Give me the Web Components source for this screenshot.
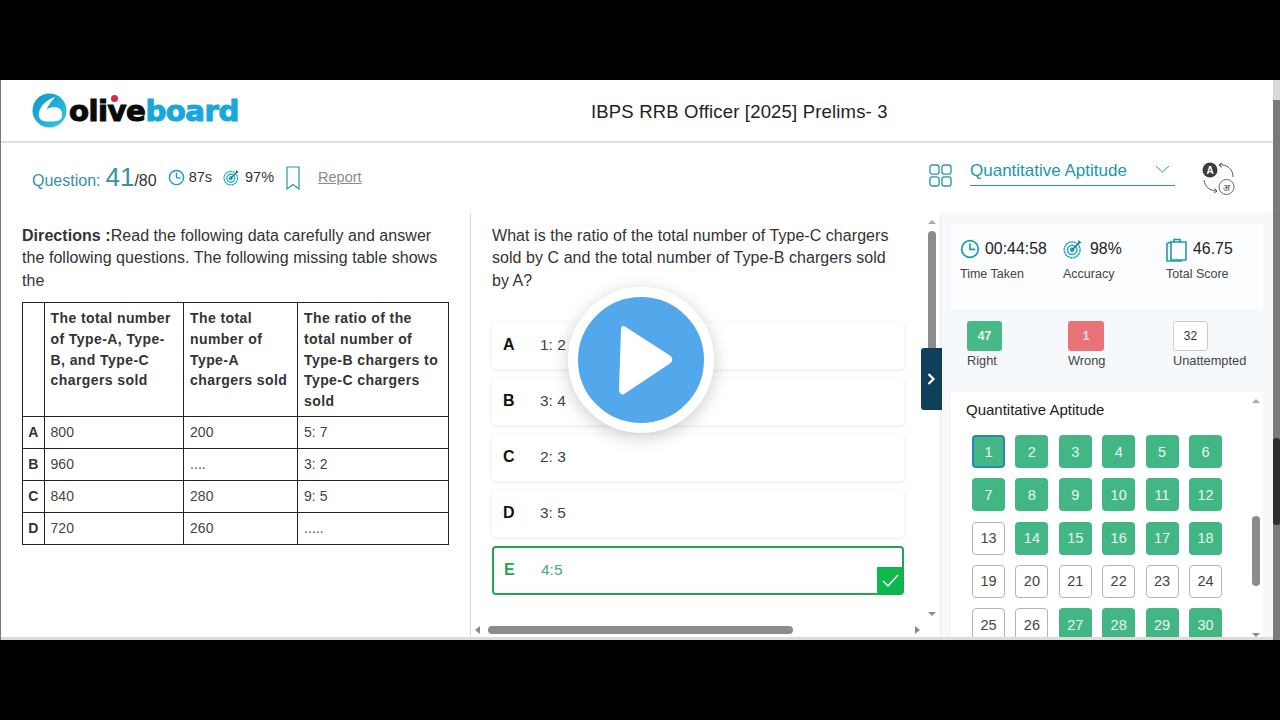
<!DOCTYPE html>
<html><head><meta charset="utf-8"><style>
html,body{margin:0;padding:0;background:#000;height:720px;overflow:hidden;font-family:"Liberation Sans",Arial,sans-serif}
</style></head><body>
<exam-app></exam-app>
<script>
function def(name, html, init){
  customElements.define(name, class extends HTMLElement{
    constructor(){super();this.attachShadow({mode:'open'}).innerHTML=typeof html==='function'?html(this):html;}
    connectedCallback(){ if(init) init(this); }
  });
}
const clock=(s)=>`<svg width="${s}" height="${s}" viewBox="0 0 24 24" fill="none" stroke="#1b9cb0" stroke-width="2"><circle cx="12" cy="12" r="10"/><path d="M12 6v6.500h5.500" stroke-linecap="round"/></svg>`;
const target=(s)=>`<svg width="${s}" height="${s}" viewBox="0 0 24 24" fill="none" stroke="#26a6bd" stroke-width="1.800"><circle cx="11" cy="13" r="9.500" stroke-dasharray="3 .6"/><circle cx="11" cy="13" r="5.600"/><circle cx="11" cy="13" r="2" fill="#26a6bd"/><path d="M11 13 20 4" stroke="#14708a" stroke-width="1.600"/><path d="M18 3.500l1-2.500 1 2 2.500 1-2.500 1.500z" fill="#14708a" stroke="none"/></svg>`;

def('ob-logo',`<style>
:host{display:flex;align-items:center;height:40px;width:210px;flex:none}
.t{font:700 29.200px/40px "DejaVu Sans",sans-serif;letter-spacing:-.5px;margin-left:2px;-webkit-text-stroke:1.100px currentColor;display:flex}
.a{color:#0a0a0a;position:relative}.b{color:#18a7dc}
.dot{position:absolute;left:42px;top:4px;width:7px;height:7px;border-radius:50%;background:#e3223f}
</style>
<svg width="35" height="35" viewBox="0 0 36 36"><defs><linearGradient id="g" x1="0" y1="0" x2="1" y2="1"><stop offset="0" stop-color="#0f93c6"/><stop offset="1" stop-color="#35c8e6"/></linearGradient></defs>
<circle cx="18" cy="18" r="17.500" fill="url(#g)"/><path d="M24 4C14 7 7 15 7 22c0 5 3.500 7 8 7.200 4.500 .3 9 .3 12.500-.8 3-1 4-4.400 3.300-8-.7-3.800-4.300-6-8-6-3 0-5.800 1-7.800 2.600C17 12 20 8 24 4z" fill="#fff"/></svg>
<div class="t"><span class="a">olive<i class="dot"></i></span><span class="b">board</span></div>`);

def('app-header',`<style>
:host{display:flex;align-items:center;height:61px;border-bottom:2px solid #dedede;padding-left:31px;background:#fff;flex:none}
.title{margin:3px 0 0 349px;font-size:18.500px;letter-spacing:.18px;line-height:22px;color:#222}
</style><ob-logo></ob-logo><div class="title">IBPS RRB Officer [2025] Prelims- 3</div>`);

def('q-toolbar',`<style>
:host{display:flex;align-items:center;height:70px;padding:0 38px 0 31px;flex:none;background:#fff;color:#333}
.q{color:#35939f;font-size:16px;display:flex;align-items:baseline;margin-top:-2px}
.n{font-size:26px;margin-left:5px}.d{font-size:16px;color:#333}
.s{display:flex;align-items:center;font-size:14.500px;gap:4px;margin-bottom:2px}
.r{font-size:14.500px;color:#8a8a8a;text-decoration:underline;margin:0 0 2px 18px}
.sp{flex:1}
.sel{width:205px;height:27px;border-bottom:1.500px solid #2a98a8;color:#2296a8;font-size:17px;line-height:24px;margin:-12px 0 0 18px;display:flex;justify-content:space-between;align-items:flex-start;box-sizing:border-box;padding-right:5px}
.sel svg{margin-top:6px}
.lang{margin-left:27px}
</style>
<div class="q">Question: <span class="n">41</span><span class="d">/80</span></div>
<div class="s" style="margin-left:11px">${clock(17)}<span>87s</span></div>
<div class="s" style="margin-left:11px">${target(17)}<span style="margin-left:1px">97%</span></div>
<svg style="margin-left:12px" width="14" height="24" viewBox="0 0 14 24" fill="none" stroke="#2a98a8" stroke-width="1.200"><path d="M1 1h12v22l-6-4.500-6 4.500z"/></svg>
<span class="r">Report</span><span class="sp"></span>
<svg width="23" height="23" viewBox="0 0 24 24" fill="none" stroke="#2a98a8" stroke-width="1.400" style="margin-top:-6px"><rect x="1" y="1" width="9.500" height="9.500" rx="2.500"/><rect x="13.500" y="1" width="9.500" height="9.500" rx="2.500"/><rect x="1" y="13.500" width="9.500" height="9.500" rx="2.500"/><rect x="13.500" y="13.500" width="9.500" height="9.500" rx="2.500"/></svg>
<div class="sel"><span>Quantitative Aptitude</span><svg width="15" height="8" viewBox="0 0 15 8" fill="none" stroke="#2a98a8" stroke-width="1"><path d="M1 1l6.500 6L14 1"/></svg></div>
<svg class="lang" width="33" height="33" viewBox="0 0 33 33" fill="none"><circle cx="8" cy="8" r="7.500" fill="#3c3c3c"/><text x="8" y="11.500" text-anchor="middle" font-family="Liberation Sans" font-weight="700" font-size="10" fill="#fff">A</text><circle cx="24.500" cy="25" r="7.500" stroke="#444" stroke-width=".8"/><text x="24.500" y="28.500" text-anchor="middle" font-family="Noto Sans,DejaVu Sans" font-size="9" fill="#444">अ</text><path d="M17 3c8-1 14 4 14 12M17 3l3.500-2M17 3l3 2.500M2 18c1 7 6 11 13 11M15 29l-3-2.500M15 29l-3 2" stroke="#444" stroke-width=".9"/></svg>`);

def('bar-v',`<style>
:host{display:flex;flex-direction:column;align-items:center;width:14px;position:relative;flex:none}
.u,.d{width:0;height:0;border-left:4px solid transparent;border-right:4px solid transparent}
.u{border-bottom:4px solid #a8a8a8;margin-top:7px}.d{border-top:4px solid #8c8c8c;margin-bottom:3px}
.t{flex:1;width:100%;position:relative}
.th{position:absolute;left:3px;width:8px;background:#8c8c8c;border-radius:4px;top:var(--top);height:var(--h)}
</style><div class="u"></div><div class="t"><div class="th"></div></div><div class="d"></div>`);

def('data-table',`<style>
:host{display:block;margin-top:10px;color:#333}
table{border-collapse:collapse;width:426px;table-layout:fixed;font-size:14px;line-height:20.700px}
td{border:1px solid #222;padding:5px 6px;line-height:21px;vertical-align:top;color:#444}
th{font-weight:700;text-align:left;border:1px solid #222;padding:4.800px 6px 4.700px;vertical-align:top;letter-spacing:.42px;color:#333}
td:first-child{font-weight:700;padding:5px 0;text-align:center;color:#333}
</style><table><colgroup><col style="width:21.500px"><col style="width:139.500px"><col style="width:114px"><col style="width:151px"></colgroup>
<tr><th></th><th>The total number of Type-A, Type-B, and Type-C chargers sold</th><th>The total number of Type-A chargers sold</th><th>The ratio of the total number of Type-B chargers to Type-C chargers sold</th></tr>
<tr><td>A</td><td>800</td><td>200</td><td>5: 7</td></tr>
<tr><td>B</td><td>960</td><td>....</td><td>3: 2</td></tr>
<tr><td>C</td><td>840</td><td>280</td><td>9: 5</td></tr>
<tr><td>D</td><td>720</td><td>260</td><td>.....</td></tr></table>`);

def('direction-pane',`<style>
:host{display:block;width:471px;box-sizing:border-box;padding:11.800px 21px 0 22px;border-right:1px solid #d8d8d8;flex:none;color:#333;font-size:16px;line-height:22.500px;letter-spacing:.05px}
b{font-weight:700}
</style><div><b>Directions :</b>Read the following data carefully and answer the following questions. The following missing table shows the</div><data-table></data-table>`);

def('opt-row',(el)=>{const sel=el.hasAttribute('correct');return `<style>
:host{display:flex;align-items:center;height:46px;margin-bottom:10px;box-sizing:border-box;border-radius:4px;position:relative;background:#fff;padding:0 0 1px 11px;font-size:15.500px;color:#444;box-shadow:0 1px 5px rgba(0,0,0,.09)}
:host([correct]){border:2px solid #22a455;height:49px;box-shadow:none;padding:0 0 0 10px;margin-top:-1px;color:#45a88a}
b{width:37px;font-size:16px;color:#111;flex:none}
:host([correct]) b{color:#22a455}
.c{position:absolute;right:-1px;bottom:-1px;width:26px;height:27px;background:#0fb84c;display:flex;align-items:center;justify-content:center}
</style><b>${el.getAttribute('k')}</b><span><slot></slot></span>${sel?'<div class="c"><svg width="17" height="13" viewBox="0 0 17 13" fill="none" stroke="#fff" stroke-width="1.400"><path d="M1 7l5 5L16 1"/></svg></div>':''}`});

def('question-pane',`<style>
:host{display:flex;width:469px;box-sizing:border-box;flex:none;position:relative;flex-direction:column;height:427px;background:#fff}
.r{display:flex;flex:1;min-height:0}
.c{width:412px;margin-left:21px;padding-top:11.800px;color:#333;font-size:16px;line-height:22.500px;letter-spacing:.05px}
.o{margin-top:30.700px;letter-spacing:0}
bar-v{margin-left:21px;--top:7px;--h:130px}
.h{height:21px;display:flex;align-items:center;position:relative;margin-left:2px;width:447px;flex:none;background:#fff}
.la,.ra{width:0;height:0;border-top:4px solid transparent;border-bottom:4px solid transparent}
.la{border-right:5px solid #8c8c8c;margin-left:2px}.ra{border-left:5px solid #8c8c8c;position:absolute;right:0}
.th{position:absolute;left:15px;width:305px;height:8px;background:#8c8c8c;border-radius:4px}
</style><div class="r"><div class="c"><div>What is the ratio of the total number of Type-C chargers sold by C and the total number of Type-B chargers sold by A?</div>
<div class="o"><opt-row k="A">1: 2</opt-row><opt-row k="B">3: 4</opt-row><opt-row k="C">2: 3</opt-row><opt-row k="D">3: 5</opt-row><opt-row k="E" correct>4:5</opt-row></div></div>
<bar-v></bar-v></div><div class="h"><i class="la"></i><i class="th"></i><i class="ra"></i></div>`);

def('stat-item',(el)=>`<style>
:host{display:block;color:#333}
.a{display:flex;align-items:center;gap:var(--g,5px);font-size:15.800px;height:24px;color:#222;letter-spacing:.05px}
.l{font-size:12.500px;margin-top:6px;color:#444}
</style><div class="a"><slot></slot></div><div class="l">${el.getAttribute('label')}</div>`);

def('count-box',(el)=>{const k=el.getAttribute('kind');return `<style>
:host{display:block;font-size:12.800px;color:#444}
.b{width:35px;height:30px;border-radius:3px;display:flex;align-items:center;justify-content:center;font-size:12px;margin-bottom:2px;box-sizing:border-box;
${k==='r'?'background:#47b987;color:#e7f7ef;font-weight:700':k==='w'?'background:#ea7379;color:#fde;font-weight:700;width:36px':'background:#fff;border:1.500px solid #ccc;color:#333'}}
</style><div class="b"><slot></slot></div>${el.getAttribute('label')}`});

def('q-num',(el)=>{const k=el.getAttribute('k')||'';return `<style>
:host{display:flex;align-items:center;justify-content:center;width:33px;height:33px;box-sizing:border-box;border-radius:4px;font-size:14.500px;
background:${k==='n'?'#fff':'#43b685'};color:${k==='n'?'#444':'#e4f6ee'};
${k==='n'?'border:1px solid #b5b5b5':k==='c'?'border:2px solid #2a88b5':''}}
</style><slot></slot>`});

def('status-panel',`<style>
:host{display:flex;flex-direction:column;width:333px;flex:none;height:427px;background:#f5f9fc;position:relative;box-sizing:border-box;padding:0 10px 0 11px;overflow:hidden;box-shadow:inset 1px 0 2px rgba(0,0,0,.05)}
.st{background:#fbfdfe;margin-top:11px;height:85px;display:flex;padding:13px 0 0 9px;box-sizing:border-box;flex:none}
.ct{display:flex;height:83px;padding:12px 0 0 16px;box-sizing:border-box;flex:none}
.qs{background:#fff;flex:1;min-height:0;display:flex;position:relative;overflow:hidden}
.in{flex:1;padding:9px 0 0 15px}
.ti{font-size:15px;color:#222;line-height:18px}
.g{display:grid;grid-template-columns:repeat(6,33px);gap:10.300px 10.400px;margin:16px 0 0 6px}
bar-v{position:absolute;right:0;top:0;bottom:0;--top:113px;--h:70px}
</style>
<div class="st">
<stat-item label="Time Taken" style="width:103px">${clock(20)}<span>00:44:58</span></stat-item>
<stat-item label="Accuracy" style="width:103px;--g:7px">${target(20)}<span>98%</span></stat-item>
<stat-item label="Total Score" style="--g:6px"><svg width="21" height="25" viewBox="0 0 21 25" fill="none" stroke="#1b9cb0" stroke-width="1.600"><path d="M5 5h15v18H5z"/><path d="M8 5V2.500h6V5M5 5 1 6.500V24h15"/></svg><span>46.75</span></stat-item>
</div>
<div class="ct">
<count-box kind="r" label="Right" style="width:101px">47</count-box>
<count-box kind="w" label="Wrong" style="width:105px">1</count-box>
<count-box kind="u" label="Unattempted">32</count-box>
</div>
<div class="qs"><div class="in"><div class="ti">Quantitative Aptitude</div><div class="g" id="g"></div></div><bar-v></bar-v></div>`,
(el)=>{const g=el.shadowRoot.getElementById('g');if(g.children.length)return;const none=[13,19,20,21,22,23,24,25,26];
let h='';for(let i=1;i<=30;i++){h+=`<q-num k="${i===1?'c':none.includes(i)?'n':''}">${i}</q-num>`;}g.innerHTML=h;});

def('collapse-tab',`<style>
:host{position:absolute;left:920px;top:268px;width:21px;height:62px;background:#0f3f5a;border-radius:3px 0 0 3px;display:flex;align-items:center;justify-content:center}
</style><svg width="9" height="14" viewBox="0 0 9 14" fill="none" stroke="#fff" stroke-width="2.200"><path d="M1.500 2l5 5-5 5"/></svg>`);

def('play-badge',`<style>
:host{position:absolute;left:567px;top:207px;width:146px;height:146px;box-sizing:border-box;border-radius:50%;background:#53a8ec;border:10px solid #fff;box-shadow:0 4px 18px rgba(0,0,0,.2);display:flex;align-items:center;justify-content:center}
svg{margin-left:10px}
</style><svg width="54" height="70" viewBox="0 0 54 70"><path d="M5 2 50 31c3 2 3 5 0 7L5 68c-2 1-4 0-4-3L3 5c0-2 1-4 2-3z" fill="#fff" stroke="#fff" stroke-width="2" stroke-linejoin="round"/></svg>`);

def('exam-app',`<style>
:host{display:flex;flex-direction:column;width:1280px;height:720px;background:#000}
.band{height:80px;background:#000;flex:none}
.page{height:560px;position:relative;background:#fff;display:flex;flex-direction:column;box-sizing:border-box;border-left:1px solid #777;overflow:hidden;padding-right:7px}
.m{display:flex;flex:1;min-height:0;margin-left:-1px}
.sb{position:absolute;right:0;top:0;bottom:0;width:7px;background:#7a7a7a}
.sb b{position:absolute;left:0;right:0;top:0;height:20px;background:#d8d8d8}
.sb i{position:absolute;left:0;right:0;top:358px;height:87px;background:#2f2f2f;border-radius:3px}
.bl{position:absolute;left:0;right:0;bottom:0;height:3px;background:#dcdcdc}
</style><div class="band"></div><div class="page"><app-header></app-header><q-toolbar></q-toolbar>
<div class="m"><direction-pane></direction-pane><question-pane></question-pane><status-panel></status-panel></div>
<collapse-tab></collapse-tab><play-badge></play-badge><div class="bl"></div><div class="sb"><b></b><i></i></div></div><div class="band"></div>`);
</script></body></html>
